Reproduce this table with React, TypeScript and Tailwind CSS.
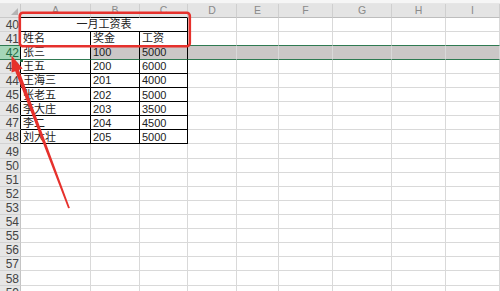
import React from 'react';

const cols = ['A', 'B', 'C', 'D', 'E', 'F', 'G', 'H', 'I'];

const data: Record<number, string[]> = {
  41: ['姓名', '奖金', '工资'],
  42: ['张三', '100', '5000'],
  43: ['王五', '200', '6000'],
  44: ['王海三', '201', '4000'],
  45: ['张老五', '202', '5000'],
  46: ['李大庄', '203', '3500'],
  47: ['李二', '204', '4500'],
  48: ['刘大壮', '205', '5000'],
};

const rows = Array.from({ length: 20 }, (_, i) => 40 + i);
const grid = 'grid grid-cols-[21px_70px_49px_48px_49px_42px_54px_59px_54px_54px]';

function Cell({ row, ci, text }: { row: number; ci: number; text?: string }) {
  const inTable = row >= 40 && row <= 48 && ci < 3;
  const green = row === 41 || row === 42;
  const active = row === 42 && ci === 0;
  const sel = row === 42 && !active;
  return (
    <div
      className={
        'flex items-center overflow-hidden whitespace-nowrap border-r border-b px-[2px] pt-[1px] text-[11px] leading-none text-[#222] ' +
        (inTable ? 'border-r-black ' : 'border-r-[#d9d9d9] ') +
        (green ? 'border-b-[#2f7a52] ' : inTable ? 'border-b-black ' : 'border-b-[#d9d9d9] ') +
        (sel ? 'bg-[#cbc7c7]' : 'bg-white')
      }
    >
      {text}
    </div>
  );
}

export default function App() {
  return (
    <div className="relative h-[291px] w-[500px] overflow-hidden bg-white font-['Liberation_Sans','Noto_Sans_CJK_SC',sans-serif]">
      <div className="h-[4px] border-b border-[#e6e6e6] bg-[#f6f6f6]" />

      <div className={grid + ' h-[13.5px]'}>
        <div className="relative border-r border-b border-[#c9c9c9] bg-[#e4e4e4]">
          <svg className="absolute right-[2px] bottom-[2px]" width="7" height="7" viewBox="0 0 7 7">
            <polygon points="7,0 7,7 0,7" fill="#b4b4b4" />
          </svg>
        </div>
        {cols.map((c, i) => (
          <div
            key={c}
            className={
              'flex items-center justify-center border-r border-b border-r-[#cfcfcf] bg-[#e4e4e4] text-[10.5px] leading-none text-[#8a8a8a] ' +
              (i < 3 ? 'border-b-black' : 'border-b-[#bdbdbd]')
            }
          >
            {c}
          </div>
        ))}
      </div>

      {rows.map((r) => (
        <div key={r} className={grid + ' h-[14.12px]'}>
          <div
            className={
              'flex items-center justify-end border-r border-b pr-[1px] pt-[1px] text-[12px] leading-none ' +
              (r >= 40 && r <= 48 ? 'border-r-black ' : 'border-r-[#c4c4c4] ') +
              (r === 42
                ? 'border-b-[#2f7a52] bg-[#a5d6b8] text-[#1f6b42]'
                : r === 41
                ? 'border-b-[#2f7a52] bg-[#e6e6e6] text-[#444]'
                : 'border-b-[#d2d2d2] bg-[#e6e6e6] text-[#444]')
            }
          >
            {r}
          </div>
          {r === 40 ? (
            <>
              <div className="col-span-3 flex items-center justify-center border-r border-b border-black pt-[1px] text-[11px] leading-none text-[#222]">
                一月工资表
              </div>
              {cols.slice(3).map((c, i) => (
                <Cell key={c} row={r} ci={i + 3} />
              ))}
            </>
          ) : (
            cols.map((c, i) => <Cell key={c} row={r} ci={i} text={data[r]?.[i]} />)
          )}
        </div>
      ))}

      {/* fill handle of the active cell */}
      <div className="absolute left-[20px] top-[58.5px] h-[3px] w-[3px] bg-[#1f6b42]" />

      <svg className="pointer-events-none absolute inset-0" width="500" height="291" viewBox="0 0 500 291">
        <rect x="19.8" y="12.8" width="170" height="33.4" rx="3" fill="none" stroke="#e6312c" strokeWidth="2.6" />
        <polygon points="11.5,55.5 22.6,68.4 19,69.9 69.9,207.9 68.1,208.3 15.2,71.3 11.6,72.6" fill="#e6312c" />
      </svg>
    </div>
  );
}
